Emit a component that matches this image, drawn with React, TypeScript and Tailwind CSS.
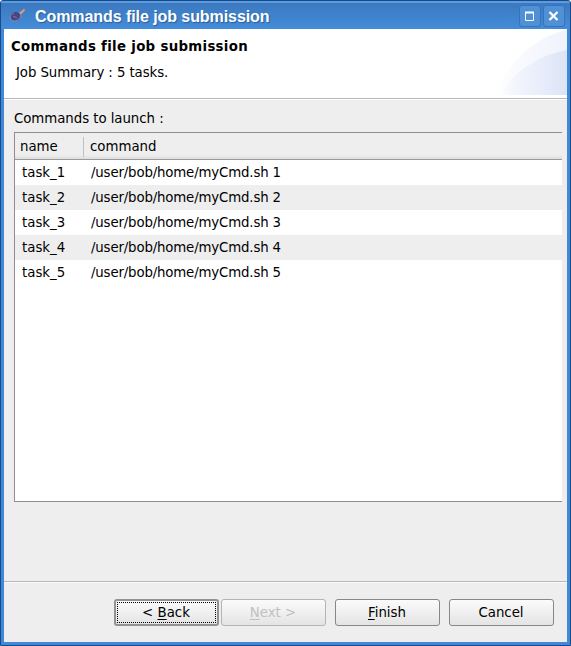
import React from "react";

const tasks = [1, 2, 3, 4, 5];

function AppIcon() {
  return (
    <svg width="18" height="16" viewBox="0 0 18 16" className="block shrink-0">
      <path d="M8 6 L14 2 L16 1 L14 5 L11 7 L13 8 L10 10 Z" fill="#b98a86" />
      <ellipse cx="6.5" cy="8.3" rx="5" ry="4.4" fill="#414787" />
      <path d="M1.5 12 Q-0.5 7 5 5 M3 13 Q9 14 12 8 M4 8 L8 10" fill="none" stroke="#ad8498" strokeWidth="0.8" />
      <path d="M11 5.5 L15.5 1.5" stroke="#d99a78" strokeWidth="1.8" />
    </svg>
  );
}

function TitleButton({ children }: { children: React.ReactNode }) {
  return (
    <div className="flex h-[22px] w-[22px] items-center justify-center rounded-[3px] border border-[#3673bb] bg-[#5090d4]">
      <svg width="20" height="20" viewBox="0 0 20 20" className="block" fill="none">
        {children}
      </svg>
    </div>
  );
}

function Button({ children, disabled = false }: { children: React.ReactNode; disabled?: boolean }) {
  return (
    <button
      className={
        "h-[27px] w-[105px] rounded-[3px] border bg-linear-to-b from-[#fbfbfb] to-[#e4e4e4] pt-px pr-px text-center " +
        (disabled ? "border-[#b4b4b4] text-[#c0c0c0]" : "border-[#878787] text-black")
      }
    >
      {children}
    </button>
  );
}

function Key({ children }: { children: React.ReactNode }) {
  return <span className="underline decoration-1 underline-offset-2">{children}</span>;
}

export default function App() {
  return (
    <div className="flex h-[646px] w-[571px] flex-col overflow-hidden rounded-t-[3px] border border-[#174a8b] bg-[#4189d6] font-['DejaVu_Sans',sans-serif] text-[13.33px] leading-4 whitespace-pre text-black">
      <header className="flex h-7 shrink-0 items-center border-t-2 border-[#5d9ade] bg-linear-to-b from-[#3b79bf] to-[#448cda] pr-[5px] pl-2">
        <AppIcon />
        <h1 className="ml-2 flex-1 pt-px font-['Liberation_Sans',sans-serif] text-[16px] leading-5 font-bold tracking-[-0.07px] text-white [text-shadow:1px_1px_1px_#285d9c]">
          Commands file job submission
        </h1>
        <div className="flex gap-[2px]">
          <TitleButton>
            <path d="M5.5 6.5H13.5V14.5H5.5Z" stroke="white" />
            <path d="M5 6.5H14" stroke="white" strokeWidth="2" />
          </TitleButton>
          <TitleButton>
            <path d="M5.5 6L13.5 14M13.5 6L5.5 14" stroke="white" strokeWidth="2.3" />
          </TitleButton>
        </div>
      </header>

      <div className="mr-[3px] mb-[3px] ml-[3px] flex min-h-0 flex-1 flex-col bg-[#eeeeee]">
        <section className="flex h-[70px] shrink-0 justify-between border-b border-[#b5b8b5] bg-white">
          <div className="pt-[10px] pl-[7px]">
            <h2 className="font-bold tracking-[0.31px]">Commands file job submission</h2>
            <p className="mt-[10px] pl-[5px] tracking-[-0.09px]">Job Summary : 5 tasks.</p>
          </div>
          <svg width="72" height="66" viewBox="0 0 72 66" className="block">
            <defs>
              <linearGradient id="outer" x1="0" y1="0" x2="1" y2="0">
                <stop offset="0" stopColor="#ffffff" />
                <stop offset="0.35" stopColor="#f9fafe" />
                <stop offset="1" stopColor="#eff3fd" />
              </linearGradient>
              <linearGradient id="inner" x1="0" y1="0" x2="1" y2="0">
                <stop offset="0" stopColor="#e6ecfa" stopOpacity="0" />
                <stop offset="0.5" stopColor="#e6ecfa" stopOpacity="0.7" />
                <stop offset="1" stopColor="#dbe4f6" />
              </linearGradient>
            </defs>
            <path d="M0 66C12 36 36 9 72 1V66Z" fill="url(#outer)" />
            <path d="M4 66C18 44 42 26 72 21V66Z" fill="url(#inner)" />
          </svg>
        </section>

        <main className="flex-1 border-t border-white pt-[11px] pr-[5px] pl-[10px]">
          <p className="h-[21px] tracking-[-0.05px]">Commands to launch :</p>
          <div className="h-[370px] border-y border-l border-[#8e8e8e] bg-white">
            <div className="flex h-[27px] border-b border-[#9a9a9a] bg-linear-to-b from-[#eeeeee] from-85% to-[#dcdcdc] pt-[6px]">
              <span className="w-[68px] pl-[5px]">name</span>
              <span className="-mt-[2px] h-5 border-l border-[#c0c0c0] pt-[2px] pl-[6px]">command</span>
            </div>
            {tasks.map((n) => (
              <div key={n} className="flex h-[25px] items-center odd:bg-[#eeeeee] even:bg-white">
                <span className="w-[76px] pl-[7px]">task_{n}</span>
                <span className="tracking-[-0.16px]">/user/bob/home/myCmd.sh {n}</span>
              </div>
            ))}
          </div>
        </main>

        <footer className="flex h-[61px] shrink-0 border-t border-[#b5b9b5] pl-[110px] shadow-[inset_0_1px_0_#fafafa]">
          <div className="mt-[17px] flex">
            <button className="h-[27px] w-[105px] rounded-[3px] border-2 border-[#929292] bg-linear-to-b from-[#fbfbfb] to-[#e4e4e4] p-px">
              <span className="flex h-full items-center justify-center border border-dotted border-black pr-px">
                {"< "}
                <Key>B</Key>ack
              </span>
            </button>
            <div className="ml-[2px]">
              <Button disabled>
                <Key>N</Key>
                {"ext >"}
              </Button>
            </div>
            <div className="ml-[9px]">
              <Button>
                <Key>F</Key>inish
              </Button>
            </div>
            <div className="ml-[9px]">
              <Button>Cancel</Button>
            </div>
          </div>
        </footer>
      </div>
    </div>
  );
}
